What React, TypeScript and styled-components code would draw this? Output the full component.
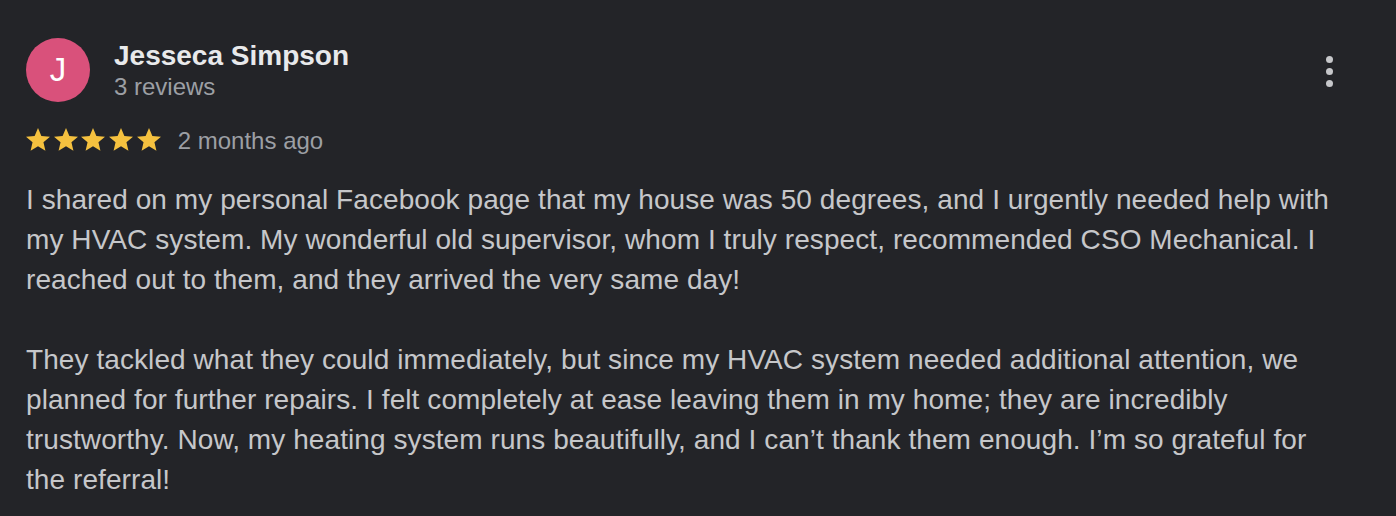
import React from 'react';
import styled, { createGlobalStyle } from 'styled-components';

const GlobalStyle = createGlobalStyle`
    html, body {
        margin: 0;
        padding: 0;
        background: #232428;
    }
    body {
        font-family: "Liberation Sans", Arial, Helvetica, sans-serif;
    }
`;

const Card = styled.div`
    width: 1396px;
    height: 516px;
    box-sizing: border-box;
    padding: 38px 60px 0 26px;
    background: #232428;
    overflow: hidden;
`;

const Header = styled.div`
    display: flex;
    align-items: flex-start;
`;

const Avatar = styled.div`
    width: 64px;
    height: 64px;
    border-radius: 50%;
    background: #d9517b;
    color: #fff;
    display: flex;
    align-items: center;
    justify-content: center;
    font-size: 33px;
    font-weight: normal;
    flex-shrink: 0;
`;

const Who = styled.div`
    display: flex;
    flex-direction: column;
    margin-left: 24px;
    margin-top: 2px;
    flex: 1;
`;

const Name = styled.div`
    color: #e8e9eb;
    font-size: 28px;
    font-weight: bold;
    line-height: 32px;
`;

const Sub = styled.div`
    color: #9c9fa4;
    font-size: 24px;
    line-height: 28px;
    margin-top: 1px;
`;

const MoreButton = styled.button`
    background: none;
    border: none;
    padding: 0;
    margin-top: 18px;
    margin-right: 3px;
    display: flex;
    flex-direction: column;
    gap: 5px;
    cursor: pointer;
`;

const Dot = styled.span`
    width: 7px;
    height: 7px;
    border-radius: 50%;
    background: #c6c7ca;
`;

const RatingRow = styled.div`
    display: flex;
    align-items: center;
    margin-top: 23px;
    height: 32px;
`;

const Stars = styled.div`
    display: flex;
    gap: 3.7px;
    margin-top: -3px;
`;

const When = styled.span`
    color: #9c9fa4;
    font-size: 24px;
    line-height: 32px;
    margin-left: 17px;
`;

const Body = styled.div`
    margin-top: 23px;
    color: #c6c7ca;
    font-size: 28px;
    line-height: 40px;
    letter-spacing: 0.08px;
`;

const Para = styled.p`
    margin: 0 0 40px;
`;

const Star = () => (
    <svg width="24" height="23" viewBox="2 2 20 19.27" preserveAspectRatio="none">
        <path
            fill="#f5c13f"
            d="M12 17.27L18.18 21l-1.64-7.03L22 9.24l-7.19-.61L12 2 9.19 8.63 2 9.24l5.46 4.73L5.82 21z"
        />
    </svg>
);

const App = () => {
    return (
        <Card>
            <GlobalStyle />
            <Header>
                <Avatar>J</Avatar>
                <Who>
                    <Name>Jesseca Simpson</Name>
                    <Sub>3 reviews</Sub>
                </Who>
                <MoreButton aria-label="More options">
                    <Dot />
                    <Dot />
                    <Dot />
                </MoreButton>
            </Header>
            <RatingRow>
                <Stars>
                    {[0, 1, 2, 3, 4].map((i) => (
                        <Star key={i} />
                    ))}
                </Stars>
                <When>2 months ago</When>
            </RatingRow>
            <Body>
                <Para>
                    I shared on my personal Facebook page that my house was 50 degrees, and I urgently needed help with
                    my HVAC system. My wonderful old supervisor, whom I truly respect, recommended CSO Mechanical. I
                    reached out to them, and they arrived the very same day!
                </Para>
                <Para>
                    They tackled what they could immediately, but since my HVAC system needed additional attention, we
                    planned for further repairs. I felt completely at ease leaving them in my home; they are incredibly
                    trustworthy. Now, my heating system runs beautifully, and I can’t thank them enough. I’m so grateful for
                    the referral!
                </Para>
            </Body>
        </Card>
    );
};

export default App;
